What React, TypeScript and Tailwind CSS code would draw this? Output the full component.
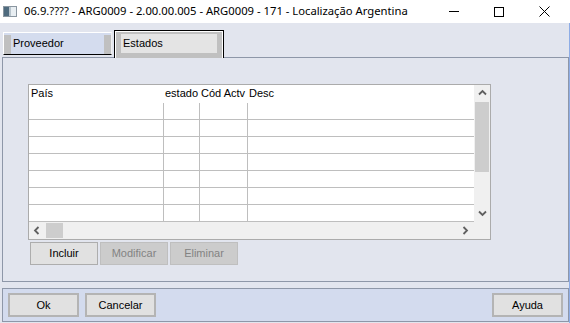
import React from 'react';

const Chevron = ({ dir }: { dir: 'up' | 'down' | 'left' | 'right' }) => {
  const paths: Record<string, string> = {
    up: 'M1 5.5 L4.5 2 L8 5.5',
    down: 'M1 2.5 L4.5 6 L8 2.5',
    left: 'M5.5 1 L2 4.5 L5.5 8',
    right: 'M2.5 1 L6 4.5 L2.5 8',
  };
  return (
    <svg width="9" height="9" viewBox="0 0 9 9">
      <path d={paths[dir]} fill="none" stroke="#606060" strokeWidth="1.8" />
    </svg>
  );
};

const rows = [0, 1, 2, 3, 4, 5, 6];

function GridRow({ header }: { header?: boolean }) {
  const line = header ? 'border-white' : 'border-[#BEBEBE]';
  return (
    <div className={`flex ${header ? 'h-[18px]' : `h-[17px] border-b ${line}`}`}>
      <div className={`w-[135px] border-r ${line} pl-[2px] leading-[17px]`}>{header ? 'País' : ''}</div>
      <div className={`w-[36px] border-r ${line} pl-[1px] leading-[17px]`}>{header ? 'estado' : ''}</div>
      <div className={`w-[48px] border-r ${line} pl-[1px] leading-[17px]`}>{header ? 'Cód Actv' : ''}</div>
      <div className="flex-1 pl-[1px] leading-[17px]">{header ? 'Desc' : ''}</div>
    </div>
  );
}

function App() {
  return (
    <div className="w-[570px] h-[323px] flex flex-col overflow-hidden bg-[#E2E5EE] text-[11px] text-black font-['Liberation_Sans',Arial,sans-serif]">
      {/* title bar */}
      <div className="h-[23px] bg-white flex items-center shrink-0">
        <div className="ml-[3px] w-[14px] h-[11px] border border-[#8A96A0] flex">
          <div className="w-[5px] bg-[#4F6B7E]" />
          <div className="w-[2px] bg-[#B8C4CC]" />
          <div className="flex-1 bg-[#E8EEF2]" />
        </div>
        <div className="ml-[7px] text-[11.25px] text-black font-['Noto_Sans',sans-serif] leading-none -mt-[2px]">
          06.9.???? - ARG0009 - 2.00.00.005 - ARG0009 - 171 - Localização Argentina
        </div>
        <div className="flex-1" />
        <div className="w-[10px] h-px bg-black mr-[35px]" />
        <div className="w-[10px] h-[10px] border border-black mr-[35px]" />
        <svg width="11" height="11" viewBox="0 0 11 11" className="mr-[20px]">
          <path d="M0.5 0.5 L10.5 10.5 M10.5 0.5 L0.5 10.5" stroke="#000" strokeWidth="1" />
        </svg>
      </div>

      {/* body */}
      <div className="flex-1 flex flex-col pl-[2px] border-r border-[#8EADE6]">
        {/* tabs */}
        <div className="mt-[7px] h-[27px] flex items-start pl-[1px] gap-[2px] relative z-10">
          <div className="mt-[2px] w-[109px] h-[23px] border-t border-l border-white border-b border-b-black border-r border-r-[#F0F0F0] bg-[#D4DCEE] flex pt-[2px]">
            <div className="w-[7px] bg-[#C0C0C0]" />
            <div className="flex-1 pl-[2px] leading-[17px]">Proveedor</div>
            <div className="w-[7px] bg-[#C0C0C0]" />
          </div>
          <div className="w-[110px] h-[28px] border border-b-0 border-black bg-white pt-px px-px">
            <div className="h-full border-[#C0C0C0] border-l-[5px] border-r-[5px] border-t-[2px] border-b-[5px] bg-[#E4E4E4] pl-[2px] leading-[18px]">
              Estados
            </div>
          </div>
        </div>

        {/* panel */}
        <div className="h-[225px] border border-[#8E97A8] pt-[26px] pl-[25px]">
          <div className="w-[463px] h-[156px] border border-[#ABABAB] bg-white flex flex-col">
            <div className="flex h-[137px]">
              <div className="w-[445px]">
                <GridRow header />
                {rows.map((r) => (
                  <GridRow key={r} />
                ))}
              </div>
              <div className="w-[16px] bg-[#F0F0F0] flex flex-col">
                <div className="h-[17px] flex items-center justify-center">
                  <Chevron dir="up" />
                </div>
                <div className="h-[70px] bg-[#CDCDCD] mx-px" />
                <div className="flex-1 flex items-end justify-center pb-[4px]">
                  <Chevron dir="down" />
                </div>
              </div>
            </div>
            <div className="h-[17px] bg-[#F0F0F0] flex items-center">
              <div className="w-[17px] flex justify-center">
                <Chevron dir="left" />
              </div>
              <div className="w-[17px] h-[15px] bg-[#CDCDCD]" />
              <div className="flex-1" />
              <div className="w-[17px] flex justify-center mr-[16px]">
                <Chevron dir="right" />
              </div>
            </div>
          </div>

          <div className="mt-[2px] ml-[2px] flex gap-[2px]">
            <div className="w-[68px] h-[23px] border border-[#ADADAD] bg-[#E1E1E1] flex items-center justify-center">Incluir</div>
            <div className="w-[68px] h-[23px] border border-[#BFBFBF] bg-[#CCCCCC] text-[#838383] flex items-center justify-center">Modificar</div>
            <div className="w-[68px] h-[23px] border border-[#BFBFBF] bg-[#CCCCCC] text-[#838383] flex items-center justify-center">Eliminar</div>
          </div>
        </div>

        {/* footer */}
        <div className="mt-[6px] h-[34px] border border-[#8E97A8] bg-[#D3DBEE] flex items-start pt-[4px] pl-[5px] pr-[5px]">
          <div className="w-[71px] h-[24px] border-2 border-[#B4B4B4] bg-[#E1E1E1] flex items-center justify-center">Ok</div>
          <div className="ml-[6px] w-[71px] h-[24px] border-2 border-[#B4B4B4] bg-[#E1E1E1] flex items-center justify-center">Cancelar</div>
          <div className="flex-1" />
          <div className="w-[71px] h-[24px] border-2 border-[#B4B4B4] bg-[#E1E1E1] flex items-center justify-center">Ayuda</div>
        </div>
      </div>
    </div>
  );
}

export default App;
